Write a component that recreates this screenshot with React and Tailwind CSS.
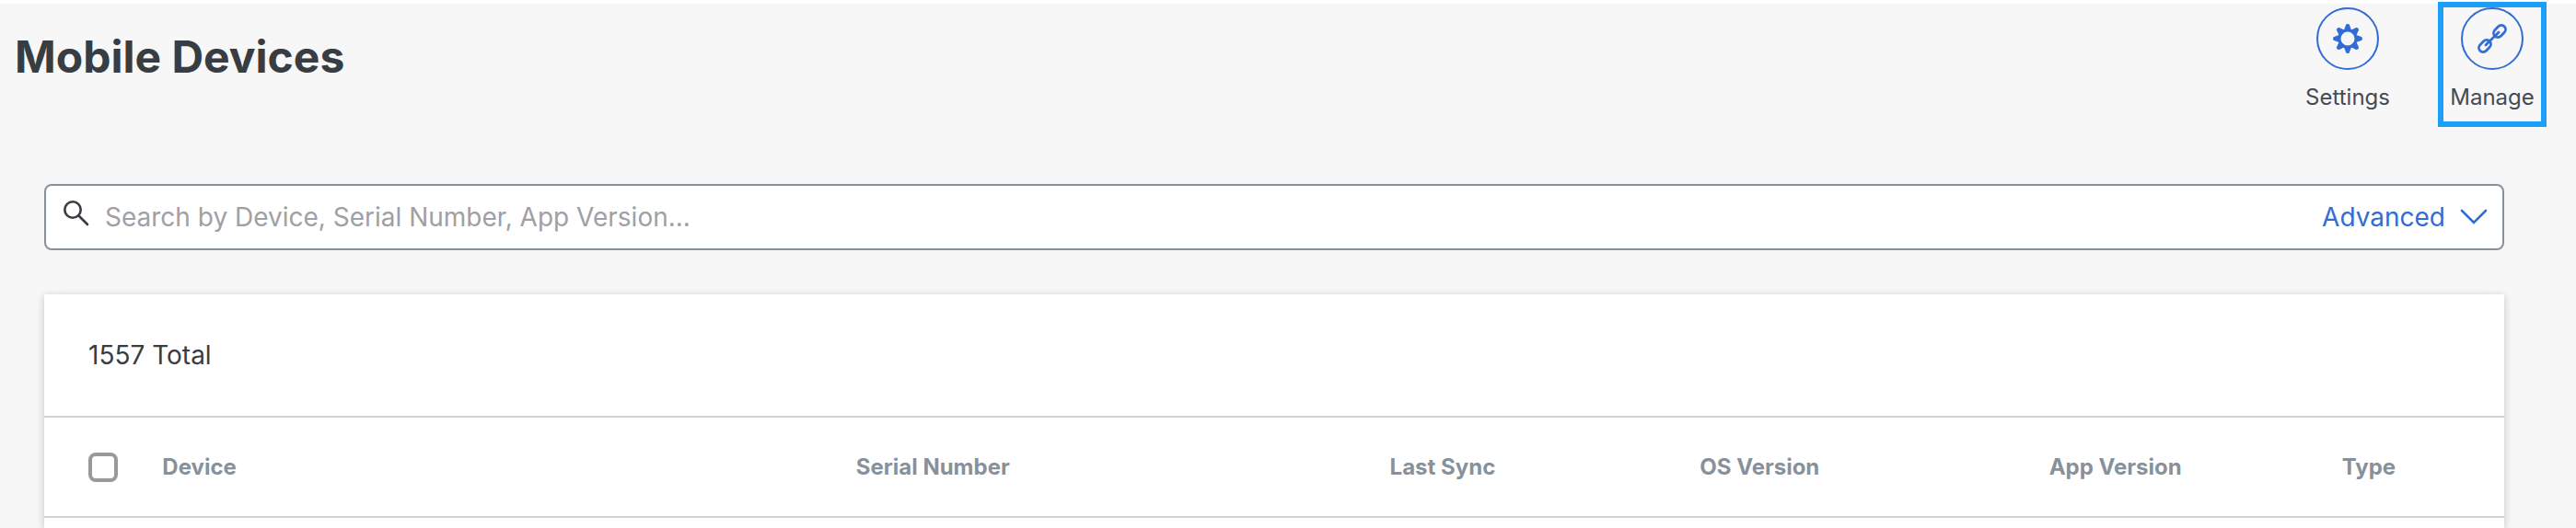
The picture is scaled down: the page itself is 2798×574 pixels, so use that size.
import { useState } from "react";

const columns = [
  { label: "Device", width: "w-[28.2%]" },
  { label: "Serial Number", width: "w-[21.7%]" },
  { label: "Last Sync", width: "w-[12.6%]" },
  { label: "OS Version", width: "w-[14.2%]" },
  { label: "App Version", width: "w-[11.9%]" },
  { label: "Type", width: "w-[6.6%]" },
];

function GearIcon() {
  return (
    <svg viewBox="0 0 32 32" className="size-8" fill="none" aria-hidden="true">
      <circle cx="16" cy="16" r="9" stroke="currentColor" strokeWidth="3" />
      {[0, 45, 90, 135, 180, 225, 270, 315].map((angle) => (
        <path
          key={angle}
          d="M11.5 8 L14 1.2 Q14.3 0 16 0 Q17.7 0 18 1.2 L20.5 8 Z"
          fill="currentColor"
          transform={`rotate(${angle} 16 16)`}
        />
      ))}
    </svg>
  );
}

function ChainIcon() {
  return (
    <svg
      viewBox="0 0 32 32"
      className="size-8"
      fill="none"
      stroke="currentColor"
      strokeLinecap="round"
      aria-hidden="true"
    >
      <g transform="rotate(-45 16 16)" strokeWidth="2.8">
        <rect x="-2.6" y="11.4" width="14.6" height="9.2" rx="4.6" />
        <rect x="20" y="11.4" width="14.6" height="9.2" rx="4.6" />
        <path d="M6 16h20" />
      </g>
    </svg>
  );
}

function ActionButton({ label, children }) {
  return (
    <button type="button" className="flex flex-col items-center text-[#454b54]">
      <span className="flex size-[68px] items-center justify-center rounded-full border-2 border-[#326cd5] text-[#326cd5]">
        {children}
      </span>
      <span className="mt-3 text-2xl leading-9">{label}</span>
    </button>
  );
}

function App() {
  const [query, setQuery] = useState("");

  return (
    <div className="min-h-screen border-t-4 border-white bg-[#f7f7f7] font-['Inter',sans-serif] text-[#383c43]">
      {/* Header */}
      <header className="flex items-start justify-between pl-4 pr-8">
        <h1 className="pt-7 text-5xl font-bold leading-[60px]">Mobile Devices</h1>
        <div className="-mt-0.5 flex items-start gap-[52px]">
          <div className="pt-1.5">
            <ActionButton label="Settings">
              <GearIcon />
            </ActionButton>
          </div>
          <div className="flex h-[136px] w-[118px] justify-center border-6 border-[#1b9ff8]">
            <ActionButton label="Manage">
              <ChainIcon />
            </ActionButton>
          </div>
        </div>
      </header>

      <main className="pl-12 pr-[78px] pt-[62px]">
        {/* Search */}
        <form
          role="search"
          onSubmit={(event) => event.preventDefault()}
          className="flex h-[72px] items-center rounded-lg border-2 border-[#87919a] bg-white pl-[18px] pr-4"
        >
          <svg
            viewBox="0 0 30 30"
            className="mb-2 size-[30px] shrink-0"
            fill="none"
            stroke="currentColor"
            strokeWidth="2.6"
            strokeLinecap="round"
            aria-hidden="true"
          >
            <circle cx="11" cy="11" r="8.7" />
            <path d="M17.5 17.5 27 27" />
          </svg>
          <input
            type="text"
            aria-label="Search devices"
            placeholder="Search by Device, Serial Number, App Version..."
            value={query}
            onChange={(event) => setQuery(event.target.value)}
            className="ml-4 min-w-0 flex-1 bg-transparent text-[28px] leading-9 outline-none placeholder:text-[#a0a0a4]"
          />
          <button type="button" className="flex items-center gap-4 text-[28px] leading-9 text-[#326cd5]">
            Advanced
            <svg
              viewBox="0 0 30 18"
              className="h-[18px] w-[30px]"
              fill="none"
              stroke="currentColor"
              strokeWidth="2.6"
              strokeLinecap="round"
              aria-hidden="true"
            >
              <path d="M2 2 15 15 28 2" />
            </svg>
          </button>
        </form>

        {/* Device list */}
        <section className="mt-12 min-h-[254px] bg-white shadow-[0_2px_8px_rgba(0,0,0,0.18),0_4px_16px_rgba(0,0,0,0.04)]">
          <p className="border-b-2 border-[#cfd4d9] px-12 py-12 text-[28px] leading-9">1557 Total</p>
          <table className="w-full table-fixed">
            <thead>
              <tr className="h-[108px] border-b-2 border-[#cfd4d9]">
                <th className="w-32 pl-12 text-left">
                  <input
                    type="checkbox"
                    aria-label="Select all devices"
                    className="block size-8 appearance-none rounded-lg border-4 border-[#999999] bg-white checked:bg-[#326cd5]"
                  />
                </th>
                {columns.map((column) => (
                  <th
                    key={column.label}
                    className={`${column.width} text-left text-2xl font-bold text-[#87919b]`}
                  >
                    {column.label}
                  </th>
                ))}
              </tr>
            </thead>
          </table>
        </section>
      </main>
    </div>
  );
}

export default App;
